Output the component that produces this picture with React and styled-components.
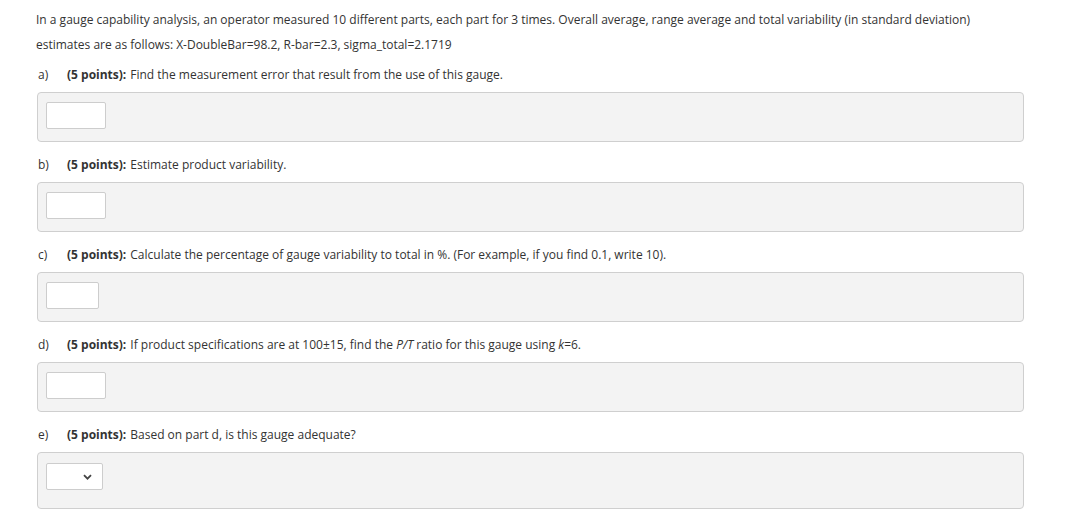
import React from 'react';
import styled, { createGlobalStyle } from 'styled-components';

const GlobalStyle = createGlobalStyle`
  body {
    margin: 0;
    background: #fff;
    font-family: "Open Sans", "Noto Sans", Arial, sans-serif;
    color: #333;
  }
`;

const Page = styled.div`
  padding: 7px 60px 0 36px;
  font-size: 12px;
`;

const Intro = styled.p`
  margin: 0;
  line-height: 25px;
`;

const Part = styled.div`
  margin-top: ${(p) => (p.$first ? '8px' : '13px')};
`;

const Question = styled.div`
  display: flex;
  align-items: center;
  height: 20px;
  line-height: 20px;
  padding-left: 2px;
`;

const Letter = styled.span`
  width: 29px;
  flex-shrink: 0;
`;

const Points = styled.strong`
  font-weight: 700;
  margin-right: 4px;
`;

const AnswerBox = styled.div`
  margin-top: 7px;
  margin-left: 1px;
  width: 987px;
  box-sizing: border-box;
  height: ${(p) => (p.$tall ? '57px' : '50px')};
  background: #f3f3f3;
  border: 1px solid #cfcfcf;
  border-radius: 4px;
  padding: 9px 0 0 8px;
`;

const TextInput = styled.input`
  display: block;
  box-sizing: border-box;
  width: ${(p) => p.$w}px;
  height: 27px;
  margin: 0;
  border: 1px solid #cdcdcd;
  border-radius: 2px;
  background: #fff;
  font-family: inherit;
  font-size: 12px;
  outline: none;
`;

const SelectBox = styled.div`
  box-sizing: border-box;
  width: 57px;
  height: 27px;
  margin-top: 1px;
  border: 1px solid #cdcdcd;
  border-radius: 2px;
  background: #fff;
  display: flex;
  align-items: center;
  justify-content: flex-end;
  padding-right: 10px;
`;

const parts = [
  { letter: 'a)', text: 'Find the measurement error that result from the use of this gauge.', w: 60 },
  { letter: 'b)', text: 'Estimate product variability.', w: 60 },
  { letter: 'c)', text: 'Calculate the percentage of gauge variability to total in %. (For example, if you find 0.1, write 10).', w: 53 },
  {
    letter: 'd)',
    text: (
      <>
        If product specifications are at 100±15, find the <i>P/T</i> ratio for this gauge using <i>k</i>=6.
      </>
    ),
    w: 60,
  },
];

export default function App() {
  return (
    <>
      <GlobalStyle />
      <Page>
        <Intro>
          In a gauge capability analysis, an operator measured 10 different parts, each part for 3 times. Overall average, range average and total variability (in standard deviation)
          <br />
          estimates are as follows: X-DoubleBar=98.2, R-bar=2.3, sigma_total=2.1719
        </Intro>
        {parts.map((p, i) => (
          <Part key={p.letter} $first={i === 0}>
            <Question>
              <Letter>{p.letter}</Letter>
              <span>
                <Points>(5 points):</Points>
                {p.text}
              </span>
            </Question>
            <AnswerBox>
              <TextInput type="text" $w={p.w} />
            </AnswerBox>
          </Part>
        ))}
        <Part>
          <Question>
            <Letter>e)</Letter>
            <span>
              <Points>(5 points):</Points>
              Based on part d, is this gauge adequate?
            </span>
          </Question>
          <AnswerBox $tall>
            <SelectBox>
              <svg width="9" height="6" viewBox="0 0 9 6">
                <path d="M1 1.2 L4.5 4.7 L8 1.2" fill="none" stroke="#444" strokeWidth="1.8" />
              </svg>
            </SelectBox>
          </AnswerBox>
        </Part>
      </Page>
    </>
  );
}
